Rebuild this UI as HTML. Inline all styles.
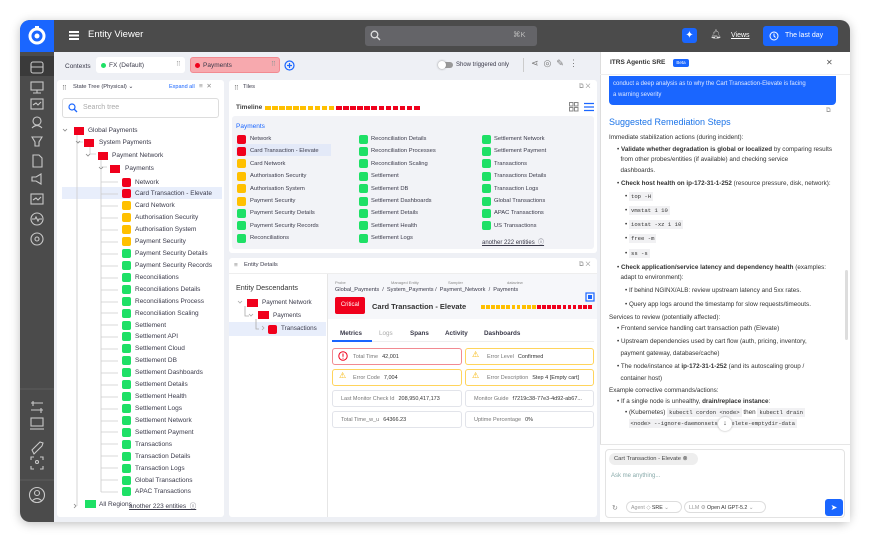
<!DOCTYPE html>
<html><head><style>
*{box-sizing:border-box;margin:0;padding:0}
body{width:870px;height:543px;background:#fff;font-family:"Liberation Sans",sans-serif;position:relative;overflow:hidden;color:#333}
.a{position:absolute}
#win{left:20px;top:20px;width:830px;height:502px;border-radius:10px;overflow:hidden;background:#eef0f5;box-shadow:0 2px 10px rgba(0,0,0,.25)}
.t{font-size:6.5px;white-space:nowrap;color:#3a3a4a}
.sq{width:9px;height:9px;border-radius:2px}
.r{background:#f0001c}.y{background:#ffc000}.g{background:#1ee066}
.ico{stroke:#c8c8c8;fill:none;stroke-width:1.1}
.cell{position:absolute;height:17px;border:1px solid #e2e4ea;border-radius:3px;background:#fff;font-size:5.5px;color:#777;padding:5px 0 0 8px;white-space:nowrap}
.cell b{color:#333;font-weight:normal;margin-left:4px}
.rt{font-size:6.3px;color:#333;white-space:nowrap;line-height:10.6px}
code{font-family:"Liberation Mono",monospace;background:#f1f1f3;padding:1px 2px;font-size:5.6px}
</style></head><body>
<div id="win" class="a">
 <div class="a" style="left:0;top:0;width:830px;height:32px;background:#4b4b4b"></div>
 <div class="a" style="left:0;top:0;width:34px;height:32px;background:#1a66ff"></div>
 <svg class="a" style="left:7px;top:6px" width="20" height="20" viewBox="0 0 20 20"><circle cx="10" cy="10" r="7" fill="none" stroke="#fff" stroke-width="3"/><circle cx="10" cy="10" r="2.5" fill="#fff"/><rect x="8" y="0" width="4" height="3" fill="#fff"/></svg>
 <div class="a" style="left:49px;top:11px;width:10px;height:1.5px;background:#fff;box-shadow:0 3.5px 0 #fff,0 7px 0 #fff"></div>
 <div class="a" style="left:68px;top:9px;font-size:9.5px;color:#fff">Entity Viewer</div>
 <div class="a" style="left:345px;top:6px;width:172px;height:20px;background:#646468;border-radius:3px"></div>
 <svg class="a" style="left:350px;top:10px" width="11" height="11"><circle cx="4.5" cy="4.5" r="3.3" stroke="#ddd" fill="none" stroke-width="1.3"/><path d="M7 7l3 3" stroke="#ddd" stroke-width="1.4"/></svg>
 <div class="a" style="left:493px;top:10px;font-size:7.5px;color:#bbb">⌘K</div>
 <div class="a" style="left:662px;top:8px;width:15px;height:15px;background:#1a66ff;border-radius:3px;color:#fff;font-size:10px;text-align:center;line-height:15px">✦</div>
 <div class="a" style="left:690px;top:9px;font-size:9px;color:#ddd">🔔︎</div>
 <div class="a" style="left:711px;top:12px;font-size:7px;color:#fff;text-decoration:underline">Views</div>
 <div class="a" style="left:743px;top:6px;width:75px;height:20px;background:#1a66ff;border-radius:3px"></div>
 <svg class="a" style="left:749px;top:11px" width="10" height="10"><circle cx="5" cy="5" r="4" stroke="#fff" fill="none"/><path d="M5 2.5V5l1.5 1.5" stroke="#fff" fill="none"/></svg>
 <div class="a" style="left:765px;top:12px;font-size:7px;color:#fff">The last day</div>
 <div class="a" style="left:0;top:32px;width:34px;height:470px;background:#4b4b4b"></div>
 <div class="a" style="left:0;top:36px;width:34px;height:20px;background:#3a3a3a"></div>
 <svg class="a" style="left:0;top:32px" width="34" height="470">
  <g class="ico"><rect x="11" y="10" width="12" height="11" rx="2"/><path d="M11 15h12"/>
  <rect x="11" y="30" width="12" height="8"/><path d="M17 38v3M13 41h8"/>
  <rect x="11" y="47" width="12" height="10"/><path d="M13 53l3-2 2 2 3-3"/>
  <circle cx="17" cy="69" r="4"/><path d="M12 76q5-5 10 0"/>
  <path d="M12 85h10l-3 5v4h-4v-4z"/>
  <path d="M13 103h6l3 3v9h-9z"/>
  <path d="M12 125h4l5-3v10l-5-3h-4z"/>
  <rect x="11" y="142" width="12" height="10"/><path d="M13 148l3-2 2 2 3-3"/>
  <circle cx="17" cy="167" r="6"/><path d="M12 167h3l1-2 2 4 1-2h3"/>
  <circle cx="17" cy="187" r="6"/><circle cx="17" cy="187" r="2"/>
  <path d="M11 351h12M11 358h12M13 349v5M21 356v5"/>
  <rect x="11" y="366" width="12" height="8"/><path d="M10 377h14"/>
  <path d="M12 398l8-8 3 1-1 3-8 8z"/>
  <path d="M11 408v-3h3M20 405h3v3M11 414v3h3M23 414v3h-3"/><circle cx="17" cy="410" r="1.5"/>
  <circle cx="17" cy="443" r="7.5"/><circle cx="17" cy="441" r="2.5"/><path d="M12 449q5-5 10 0"/></g>
  <path d="M0 337h34M0 428h34" stroke="#5c5c5c"/>
 </svg>
 <div class="a" style="left:580px;top:32px;width:250px;height:470px;background:#fff;border-left:1px solid #ddd"></div>
</div>

<div class="a t" style="left:65px;top:63px;font-size:6.5px">Contexts</div>
<div class="a" style="left:96px;top:57px;width:89px;height:16px;background:#fff;border-radius:3px"></div>
<div class="a" style="left:101px;top:63px;width:5px;height:5px;border-radius:50%;background:#1ee066"></div>
<div class="a t" style="left:109px;top:62px">FX (Default)</div>
<div class="a t" style="left:176px;top:60px;color:#aaa">⠿</div>
<div class="a" style="left:190px;top:57px;width:90px;height:16px;background:#f7a9ae;border:1px solid #f28a91;border-radius:3px"></div>
<div class="a" style="left:195px;top:63px;width:5px;height:5px;border-radius:50%;background:#f0001c"></div>
<div class="a t" style="left:203px;top:62px">Payments</div>
<div class="a t" style="left:271px;top:60px;color:#999">⠿</div>
<svg class="a" style="left:284px;top:60px" width="11" height="11"><circle cx="5.5" cy="5.5" r="4.5" stroke="#1a66ff" fill="none" stroke-width="1.2"/><path d="M5.5 3v5M3 5.5h5" stroke="#1a66ff" stroke-width="1.2"/></svg>
<div class="a" style="left:439px;top:62px;width:14px;height:6px;border-radius:3px;background:#999"></div>
<div class="a" style="left:438px;top:61px;width:8px;height:8px;border-radius:50%;background:#fff;box-shadow:0 0 2px #888"></div>
<div class="a t" style="left:456px;top:62px;font-size:6px">Show triggered only</div>
<div class="a" style="left:523px;top:58px;width:1px;height:14px;background:#ccc"></div>
<div class="a" style="left:531px;top:58px;font-size:9px;color:#777">⋖ &nbsp;◎ &nbsp;✎ &nbsp;⋮</div>

<div class="a" style="left:57px;top:80px;width:167px;height:437px;background:#fff;border-radius:3px"></div>
<div class="a t" style="left:62px;top:84px;color:#888">⠿</div>
<div class="a t" style="left:73px;top:84px;font-size:5.8px">State Tree (Physical) ⌄</div>
<div class="a t" style="left:169px;top:84px;font-size:5.5px;color:#1a66ff">Expand all</div>
<div class="a t" style="left:199px;top:82px;color:#888">≡ &nbsp;✕</div>
<div class="a" style="left:62px;top:98px;width:157px;height:20px;border:1px solid #ddd;border-radius:3px"></div>
<svg class="a" style="left:68px;top:103px" width="10" height="10"><circle cx="4" cy="4" r="3" stroke="#1a66ff" fill="none" stroke-width="1.2"/><path d="M6 6l3 3" stroke="#1a66ff" stroke-width="1.3"/></svg>
<div class="a t" style="left:83px;top:104px;font-size:7px;color:#aaa">Search tree</div>
<div class="a" style="left:62px;top:187px;width:160px;height:12px;background:#e8eefb"></div>
<svg class="a" style="left:57px;top:120px" width="167" height="395"><g stroke="#ccc" fill="none" stroke-width=".8">
<path d="M20 15v7h6M33 27v7h6M20 22v364M44 40v7h6"/>
<path d="M44 62h17M44 74h17M44 86h17M44 98h17M44 110h17M44 122h17M44 134h17M44 146h17M44 158h17M44 170h17M44 182h17M44 193h17M44 205h17M44 217h17M44 229h17M44 241h17M44 253h17M44 265h17M44 277h17M44 289h17M44 301h17M44 312h17M44 324h17M44 336h17M44 348h17M44 360h17M44 372h17M44 50v322"/></g>
<path d="M6 9l2 2 2-2M19 21l2 2 2-2M29 34l2 2 2-2M42 47l2 2 2-2M17 384l2 2-2 2" stroke="#888" fill="none" stroke-width=".8"/></svg>
<div id="tree"></div>

<div class="a" style="left:229px;top:80px;width:368px;height:173px;background:#fff;border-radius:3px"></div>
<div class="a t" style="left:234px;top:84px;color:#888">⠿</div>
<div class="a t" style="left:243px;top:84px;font-size:5.8px">Tiles</div>
<div class="a t" style="left:579px;top:83px;color:#999">⧉ ✕</div>
<div class="a t" style="left:236px;top:104px;font-size:6.5px;font-weight:bold;color:#444">Timeline</div>
<div class="a" id="tl1" style="left:265px;top:106px;height:4px;display:flex;gap:1.5px"></div>
<svg class="a" style="left:569px;top:102px" width="26" height="10"><g fill="none" stroke="#888"><rect x=".5" y=".5" width="3.5" height="3.5"/><rect x="5.5" y=".5" width="3.5" height="3.5"/><rect x=".5" y="5.5" width="3.5" height="3.5"/><rect x="5.5" y="5.5" width="3.5" height="3.5"/></g><path d="M15 1.5h10M15 5h10M15 8.5h10" stroke="#1a66ff" stroke-width="1.2"/></svg>
<div class="a" style="left:232px;top:116px;width:362px;height:133px;background:#f2f3f7;border-radius:3px"></div>
<div class="a t" style="left:236px;top:123px;font-size:6.5px;color:#1a66ff">Payments</div>
<div class="a" style="left:236px;top:144px;width:95px;height:12px;background:#e3e9f8"></div>
<div id="tiles"></div>

<div class="a" style="left:229px;top:258px;width:368px;height:259px;background:#fff;border-radius:3px"></div>
<div class="a t" style="left:234px;top:262px;color:#888">≡</div>
<div class="a t" style="left:244px;top:262px;font-size:5.8px">Entity Details</div>
<div class="a t" style="left:579px;top:261px;color:#999">⧉ ✕</div>
<div class="a" style="left:229px;top:273px;width:368px;height:1px;background:#eee"></div>
<div class="a" style="left:327px;top:274px;width:270px;height:45px;background:#f6f7fa"></div>
<div class="a" style="left:327px;top:274px;width:1px;height:243px;background:#e6e6e6"></div>
<div class="a t" style="left:236px;top:283px;font-size:7.2px;color:#333">Entity Descendants</div>
<div class="a" style="left:229px;top:322px;width:97px;height:14px;background:#e8eefb"></div>
<svg class="a" style="left:235px;top:296px" width="40" height="40"><g stroke="#aaa" fill="none" stroke-width=".8"><path d="M3 5l2 2 2-2M14 18l2 2 2-2M27 30l2 2-2 2"/><path d="M10 10v10h4M21 23v10h3"/></g></svg>
<div class="a r" style="left:247px;top:299px;width:11px;height:8px"></div><div class="a t" style="left:262px;top:299px;font-size:6.3px">Payment Network</div>
<div class="a r" style="left:258px;top:311px;width:11px;height:8px"></div><div class="a t" style="left:273px;top:312px;font-size:6.3px">Payments</div>
<div class="a r sq" style="left:268px;top:325px"></div><div class="a t" style="left:281px;top:325px;font-size:6.3px">Transactions</div>
<div class="a t" style="left:335px;top:280px;font-size:4px;color:#888">Probe</div>
<div class="a t" style="left:391px;top:280px;font-size:4px;color:#888">Managed Entity</div>
<div class="a t" style="left:448px;top:280px;font-size:4px;color:#888">Sampler</div>
<div class="a t" style="left:507px;top:280px;font-size:4px;color:#888">dataview</div>
<div class="a t" style="left:335px;top:287px;font-size:5.6px">Global_Payments &nbsp;/ &nbsp;System_Payments / &nbsp;Payment_Network &nbsp;/ &nbsp;Payments</div>
<div class="a" style="left:335px;top:297px;width:30px;height:17px;background:#f0001c;border-radius:2px;color:#fff;font-size:6px;text-align:center;line-height:17px">Critical</div>
<div class="a t" style="left:372px;top:302px;font-size:7.5px;font-weight:bold;color:#333">Card Transaction - Elevate</div>
<svg class="a" style="left:585px;top:292px" width="10" height="10"><rect x="1" y="1" width="8" height="8" fill="none" stroke="#1a66ff" stroke-width="1.2"/><rect x="3" y="3" width="4" height="4" fill="#1a66ff"/></svg>
<div class="a" id="tl2" style="left:481px;top:305px;height:4px;display:flex;gap:1.3px"></div>
<div class="a t" style="left:340px;top:330px;font-size:6.3px;font-weight:bold">Metrics</div>
<div class="a t" style="left:379px;top:330px;font-size:6.3px;color:#aaa">Logs</div>
<div class="a t" style="left:410px;top:330px;font-size:6.3px;font-weight:bold">Spans</div>
<div class="a t" style="left:445px;top:330px;font-size:6.3px;font-weight:bold">Activity</div>
<div class="a t" style="left:484px;top:330px;font-size:6.3px;font-weight:bold">Dashboards</div>
<div class="a" style="left:332px;top:341px;width:262px;height:1px;background:#eee"></div>
<div class="a" style="left:332px;top:340px;width:40px;height:2px;background:#1a66ff"></div>
<div class="cell" style="left:332px;top:348px;width:130px;border-color:#f28a91;padding-left:20px">Total Time<b>42,001</b></div>
<div class="cell" style="left:465px;top:348px;width:129px;border-color:#ffd45c;padding-left:21px">Error Level<b>Confirmed</b></div>
<div class="cell" style="left:332px;top:369px;width:130px;border-color:#ffd45c;padding-left:20px">Error Code<b>7,004</b></div>
<div class="cell" style="left:465px;top:369px;width:129px;border-color:#ffd45c;padding-left:21px">Error Description<b>Step 4 [Empty cart]</b></div>
<div class="cell" style="left:332px;top:390px;width:130px">Last Monitor Check Id<b>208,950,417,173</b></div>
<div class="cell" style="left:465px;top:390px;width:129px">Monitor Guide<b>f7219c38-77e3-4d92-ab67...</b></div>
<div class="cell" style="left:332px;top:411px;width:130px">Total Time_w_u<b>64366.23</b></div>
<div class="cell" style="left:465px;top:411px;width:129px">Uptime Percentage<b>0%</b></div>
<svg class="a" style="left:338px;top:351px" width="10" height="10"><circle cx="5" cy="5" r="4.2" stroke="#f0001c" fill="none"/><path d="M5 2.5v3.2M5 6.8v.8" stroke="#f0001c"/></svg>
<div class="a" style="left:472px;top:350px;font-size:8px;color:#f5b400">⚠</div>
<div class="a" style="left:339px;top:371px;font-size:8px;color:#f5b400">⚠</div>
<div class="a" style="left:472px;top:371px;font-size:8px;color:#f5b400">⚠</div>

<div class="a t" style="left:610px;top:59px;font-size:6.5px;font-weight:bold;color:#333">ITRS Agentic SRE</div>
<div class="a" style="left:673px;top:59px;width:16px;height:8px;background:#1a66ff;border-radius:2px;color:#fff;font-size:4.5px;text-align:center;line-height:8px">Beta</div>
<div class="a t" style="left:826px;top:58px;font-size:8px;color:#555">✕</div>
<div class="a" style="left:600px;top:74px;width:250px;height:1px;background:#eee"></div>
<div class="a" style="left:609px;top:76px;width:227px;height:29px;background:#1a66ff;border-radius:0 0 4px 4px;color:#dfe8ff;font-size:6px;padding:3px 4px;line-height:10.5px">conduct a deep analysis as to why the Cart Transaction-Elevate is facing<br>a warning severity</div>
<div class="a t" style="left:826px;top:107px;color:#999">⧉</div>
<div class="a" style="left:609px;top:117px;font-size:9px;color:#1a73e8;white-space:nowrap">Suggested Remediation Steps</div>
<div class="a rt" style="left:609px;top:133px">
Immediate stabilization actions (during incident):<br>
<div style="margin-left:8px;line-height:10.5px;margin-top:1px">• <b>Validate whether degradation is global or localized</b> by comparing results<br>&nbsp; from other probes/entities (if available) and checking service<br>&nbsp; dashboards.</div>
<div style="margin-left:8px;margin-top:3px">• <b>Check host health on ip-172-31-1-252</b> (resource pressure, disk, network):</div>
<div style="margin-left:16px;line-height:14.2px">• <code>top -H</code><br>• <code>vmstat 1 10</code><br>• <code>iostat -xz 1 10</code><br>• <code>free -m</code><br>• <code>ss -s</code></div>
<div style="margin-left:8px;margin-top:2px">• <b>Check application/service latency and dependency health</b> (examples:<br>&nbsp; adapt to environment):</div>
<div style="margin-left:16px;line-height:14px">• If behind NGINX/ALB: review upstream latency and 5xx rates.<br>• Query app logs around the timestamp for slow requests/timeouts.</div>
<div style="margin-top:1px">Services to review (potentially affected):</div>
<div style="margin-left:8px;line-height:12.5px">• Frontend service handling cart transaction path (Elevate)<br>• Upstream dependencies used by cart flow (auth, pricing, inventory,<br>&nbsp; payment gateway, database/cache)<br>• The node/instance at <b>ip-172-31-1-252</b> (and its autoscaling group /<br>&nbsp; container host)</div>
<div>Example corrective commands/actions:</div>
<div style="margin-left:8px">• If a single node is unhealthy, <b>drain/replace instance</b>:</div>
<div style="margin-left:16px;line-height:11px">• (Kubernetes) <code>kubectl cordon &lt;node&gt;</code> then <code>kubectl drain</code><br>&nbsp; <code>&lt;node&gt; --ignore-daemonsets --delete-emptydir-data</code></div>
</div>
<div class="a" style="left:718px;top:417px;width:14px;height:14px;border-radius:50%;background:#fff;box-shadow:0 0 2px #aaa;font-size:7px;text-align:center;line-height:14px">↓</div>
<div class="a" style="left:845px;top:270px;width:3px;height:70px;background:#ddd;border-radius:2px"></div>
<div class="a" style="left:600px;top:444px;width:250px;height:78px;background:#fff;border-top:1px solid #e6e6e6"></div>
<div class="a" style="left:605px;top:449px;width:240px;height:69px;border:1px solid #e3e3e3;border-radius:4px"></div>
<div class="a" style="left:609px;top:453px;width:89px;height:12px;background:#eee;border-radius:6px;font-size:5.8px;color:#444;padding:3px 0 0 5px;white-space:nowrap">Cart Transaction - Elevate ⊗</div>
<div class="a t" style="left:611px;top:473px;font-size:6px;color:#8aa">Ask me anything...</div>
<div class="a t" style="left:612px;top:504px;color:#888;font-size:7px">↻</div>
<div class="a" style="left:626px;top:501px;width:56px;height:12px;border:1px solid #ddd;border-radius:6px;font-size:5.3px;color:#999;padding:3px 0 0 4px;white-space:nowrap">Agent ◇ <span style="color:#333">SRE</span> ⌄</div>
<div class="a" style="left:684px;top:501px;width:82px;height:12px;border:1px solid #ddd;border-radius:6px;font-size:5.3px;color:#999;padding:3px 0 0 4px;white-space:nowrap">LLM ⚙ <span style="color:#333">Open AI GPT-5.2</span> ⌄</div>
<div class="a" style="left:825px;top:499px;width:18px;height:17px;background:#1a66ff;border-radius:3px;color:#fff;font-size:8px;text-align:center;line-height:17px">➤</div>

<script>
var tree=[["Network","r"],["Card Transaction - Elevate","r"],["Card Network","y"],["Authorisation Security","y"],["Authorisation System","y"],["Payment Security","y"],["Payment Security Details","g"],["Payment Security Records","g"],["Reconciliations","g"],["Reconciliations Details","g"],["Reconciliations  Process","g"],["Reconciliation  Scaling","g"],["Settlement","g"],["Settlement API","g"],["Settlement Cloud","g"],["Settlement DB","g"],["Settlement Dashboards","g"],["Settlement Details","g"],["Settlement Health","g"],["Settlement Logs","g"],["Settlement Network","g"],["Settlement Payment","g"],["Transactions","g"],["Transaction Details","g"],["Transaction Logs","g"],["Global Transactions","g"],["APAC Transactions","g"]];
var h="";
[["Global Payments",74,88,126],["System Payments",84,99,138],["Payment Network",98,112,151],["Payments",110,125,164]].forEach(function(f){
h+='<div class="a r" style="left:'+f[1]+'px;top:'+(f[3]+1)+'px;width:10px;height:8px"></div><div class="a t" style="left:'+f[2]+'px;top:'+(f[3]+1)+'px">'+f[0]+'</div>';});
tree.forEach(function(e,i){var y=177.5+i*11.92;h+='<div class="a sq '+e[1]+'" style="left:122px;top:'+y+'px"></div><div class="a t" style="left:135px;top:'+(y+1)+'px">'+e[0]+'</div>';});
h+='<div class="a g" style="left:85px;top:500px;width:11px;height:8px"></div><div class="a t" style="left:99px;top:501px">All Regions</div><div class="a t" style="left:129px;top:500px;text-decoration:underline">another 223 entities &nbsp;ⓘ</div>';
document.getElementById("tree").innerHTML=h;
var cols=[[237,250,["r","Network"],["r","Card Transaction - Elevate"],["y","Card Network"],["y","Authorisation Security"],["y","Authorisation System"],["y","Payment Security"],["g","Payment Security Details"],["g","Payment Security Records"],["g","Reconciliations"]],
[359,371,["g","Reconciliation Details"],["g","Reconciliation Processes"],["g","Reconciliation Scaling"],["g","Settlement"],["g","Settlement DB"],["g","Settlement Dashboards"],["g","Settlement Details"],["g","Settlement Health"],["g","Settlement Logs"]],
[482,494,["g","Settlement Network"],["g","Settlement Payment"],["g","Transactions"],["g","Transactions Details"],["g","Transaction Logs"],["g","Global Transactions"],["g","APAC Transactions"],["g","US Transactions"]]];
h="";cols.forEach(function(c){for(var i=2;i<c.length;i++){var y=134.5+(i-2)*12.4;h+='<div class="a sq '+c[i][0]+'" style="left:'+c[0]+'px;top:'+y+'px"></div><div class="a t" style="left:'+c[1]+'px;top:'+(y+1.5)+'px;font-size:5.8px">'+c[i][1]+'</div>';}});
h+='<div class="a t" style="left:482px;top:237px;font-size:6px;text-decoration:underline">another 222 entities &nbsp;ⓘ</div>';
document.getElementById("tiles").innerHTML=h;
function tl(id,w,n){var s="";for(var i=0;i<22;i++)s+='<div style="flex:none;width:'+w+'px;height:4px;background:'+(i<n?'#ffc000':'#f0001c')+'"></div>';document.getElementById(id).innerHTML=s;}
tl("tl1",5.6,10);tl("tl2",3.8,11);
</script>
</body></html>
